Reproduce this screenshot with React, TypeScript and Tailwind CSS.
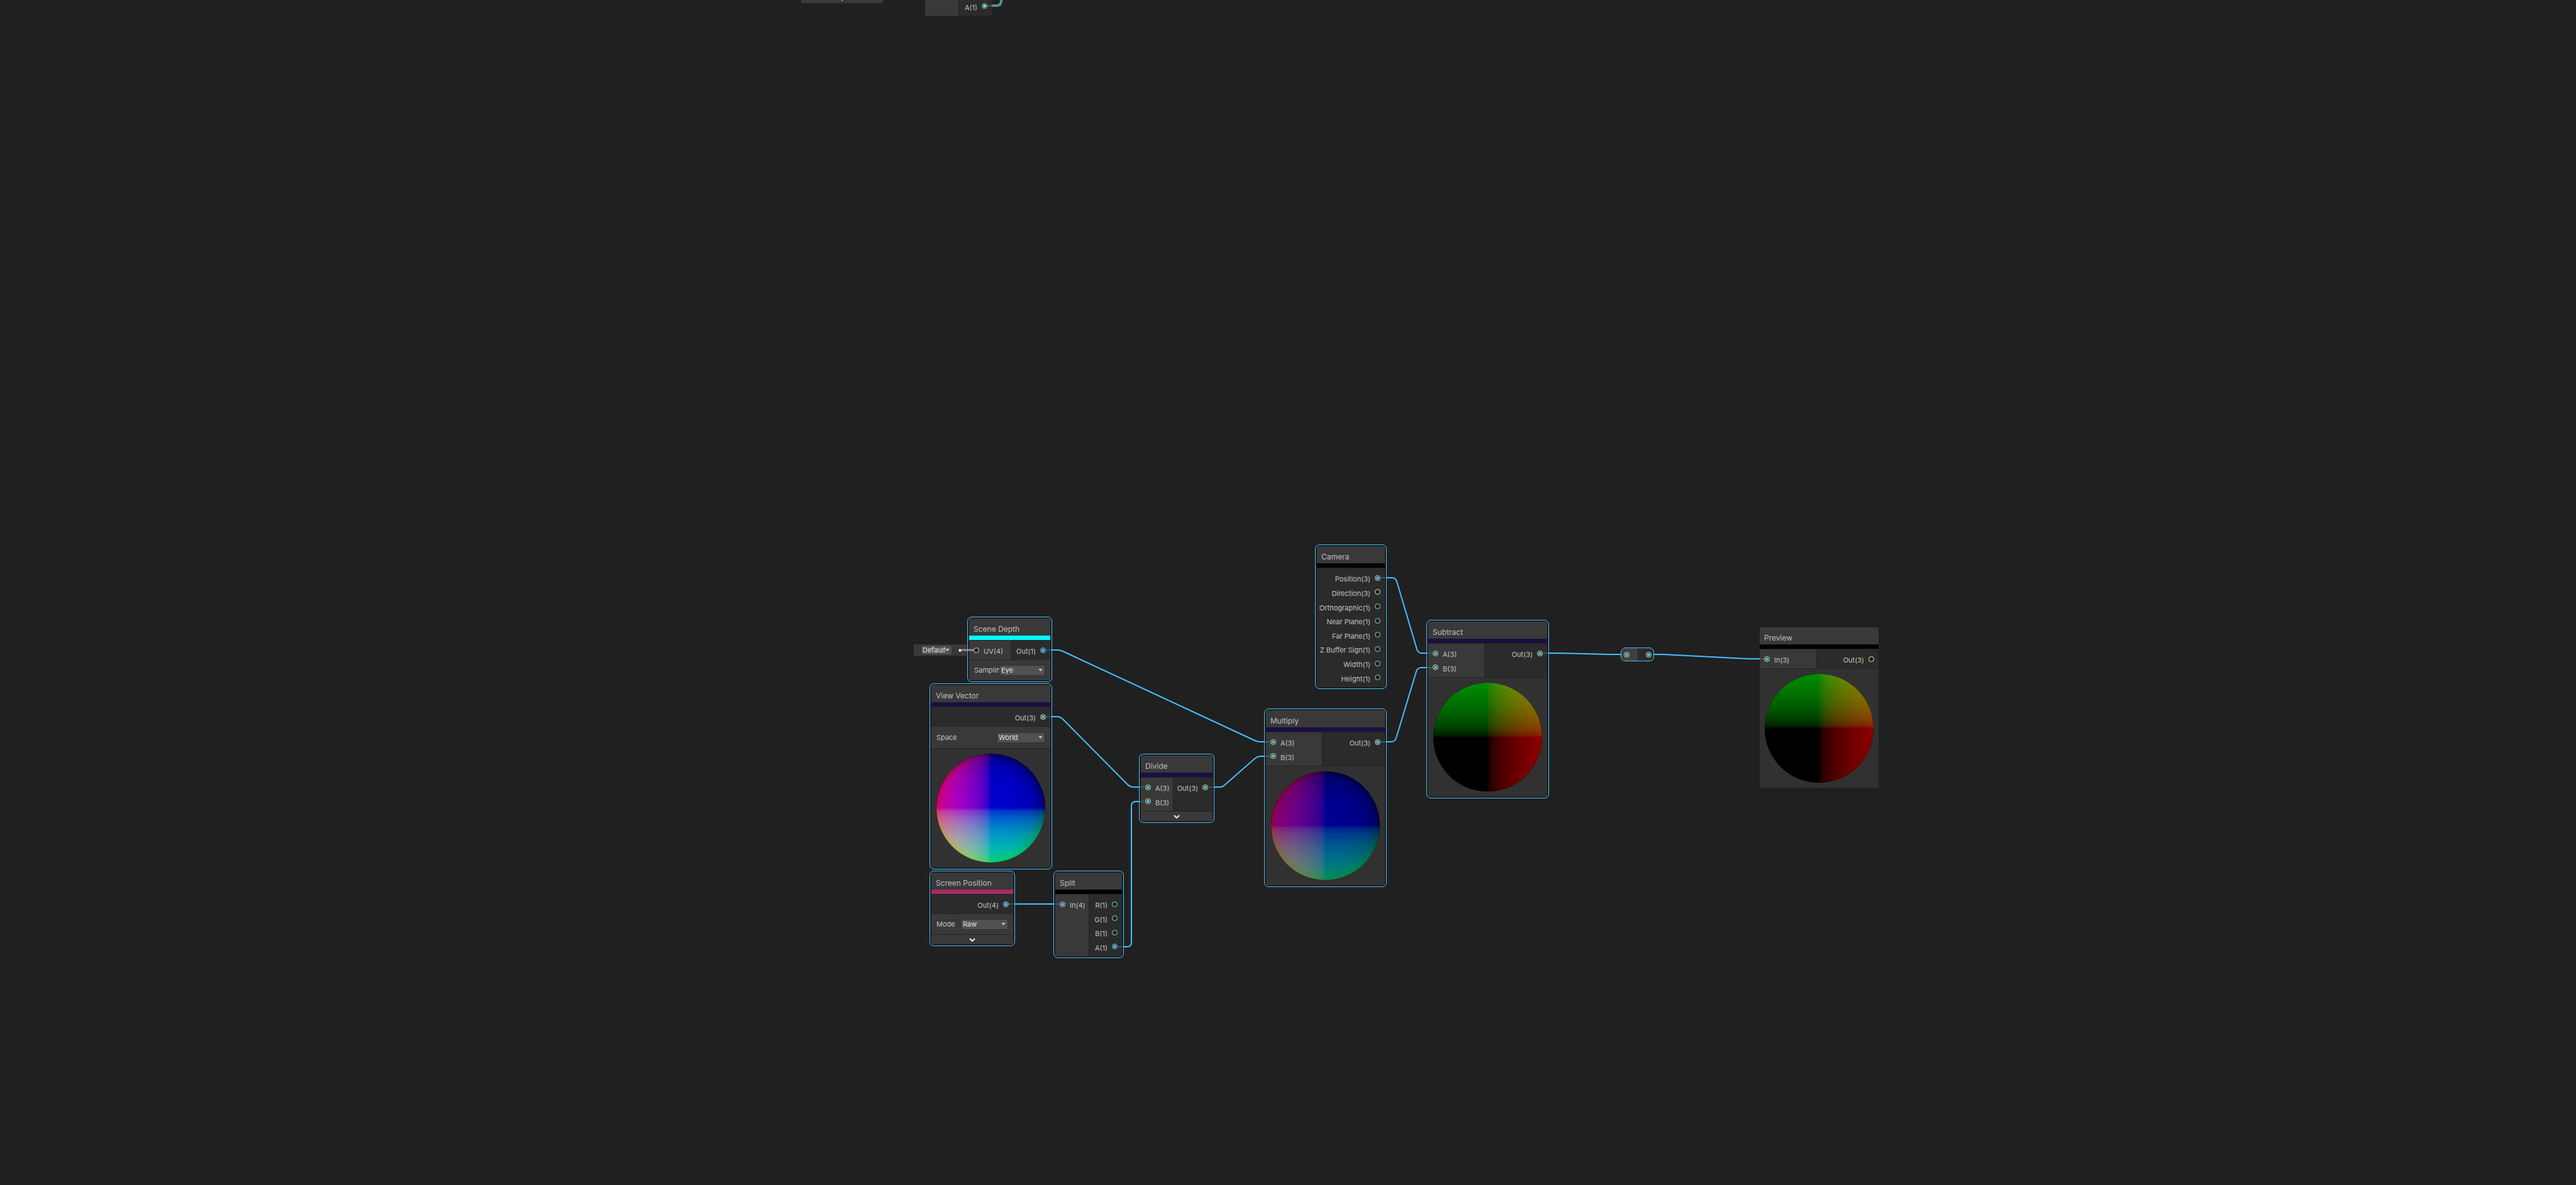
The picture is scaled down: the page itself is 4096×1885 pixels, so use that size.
import React from "react";

type PortKind = "vec1" | "vec3" | "vec4";
type PortData = { label: string; kind: PortKind; on?: boolean };

const ring: Record<PortKind, string> = {
  vec1: "border-[#7fdfe0]",
  vec3: "border-[#f2f28e]",
  vec4: "border-[#f4c4ee]",
};

function Dot({ kind, on, fill = "bg-[#44c0ff]" }: { kind: PortKind; on?: boolean; fill?: string }) {
  return (
    <span className={`flex size-[9px] shrink-0 items-center justify-center rounded-full border bg-[#1e1e1e] ${ring[kind]}`}>
      {on && <span className={`size-[5px] rounded-full ${fill}`} />}
    </span>
  );
}

function InPort({ label, kind, on }: PortData) {
  return (
    <li className="flex flex-1 items-center gap-[7px] pl-[7px]">
      <Dot kind={kind} on={on} />
      <span className="pt-[4px]">{label}</span>
    </li>
  );
}

function OutPort({ label, kind, on, fill }: PortData & { fill?: string }) {
  return (
    <li className="flex flex-1 items-center justify-end gap-[7px] pr-[7px]">
      <span className="pt-[4px]">{label}</span>
      <Dot kind={kind} on={on} fill={fill} />
    </li>
  );
}

function Picker({ label, value, className }: { label: string; value: string; className: string }) {
  return (
    <span className={`relative flex shrink-0 ${className}`}>
      <select
        aria-label={label}
        defaultValue={value}
        className="h-full w-full appearance-none overflow-hidden rounded-[2px] border border-[#303030] bg-[#515151] pr-[10px] pl-[2px] text-[11px] leading-[13px] text-[#e0e0e0]"
      >
        <option>{value}</option>
      </select>
      <svg viewBox="0 0 8 5" className="pointer-events-none absolute top-1/2 right-[4px] h-[4px] w-[7px] -translate-y-1/2">
        <path d="M0 0h8L4 5z" fill="#c4c4c4" />
      </svg>
    </span>
  );
}

function Control({ label, value, height, picker }: { label: string; value: string; height: string; picker: string }) {
  return (
    <div className={`flex items-center justify-between border-t border-[#232323] bg-[#393939] pr-[8px] pl-[8px] ${height}`}>
      <span className="min-w-0 whitespace-nowrap">{label}</span>
      <Picker label={label} value={value} className={picker} />
    </div>
  );
}

function Expand() {
  return (
    <button aria-label="Expand" className="flex h-[16px] w-full items-center justify-center border-t border-[#232323] bg-[#393939]">
      <svg viewBox="0 0 10 6" className="h-[6px] w-[10px]" fill="none" stroke="#f0f0f0" strokeWidth="2">
        <path d="M1 1l4 4 4-4" />
      </svg>
    </button>
  );
}

const stops = [0, 0.02, 0.06, 0.12, 0.2, 0.3, 0.45, 0.6, 0.8, 1];
const curve = (t: number) => Math.pow(t, 0.4545);

function AxisGradient({ id, color, x, y }: { id: string; color: [number, number, number]; x: number; y: number }) {
  return (
    <linearGradient id={id} gradientUnits="userSpaceOnUse" x1="100" y1="100" x2={100 + 100 * x} y2={100 + 100 * y}>
      {stops.map((t) => (
        <stop key={t} offset={t} stopColor={`rgb(${color.map((c) => Math.round(c * curve(t))).join(",")})`} />
      ))}
    </linearGradient>
  );
}

function Sphere({ id, red, green, blue = 0, flip }: { id: string; red: number; green: number; blue?: number; flip?: boolean }) {
  const d = flip ? -1 : 1;
  const falloff: [number, number][] = [
    [0, 1],
    [0.5, 0.95],
    [0.75, 0.86],
    [0.9, 0.72],
    [1, 0.44],
  ];
  return (
    <div className="border-t border-[#232323] bg-[#313131] p-[8px]">
      <svg viewBox="0 0 200 200" className="isolate block w-full">
        <defs>
          <AxisGradient id={`${id}-r`} color={[red, 0, 0]} x={d} y={0} />
          <AxisGradient id={`${id}-g`} color={[0, green, 0]} x={0} y={-d} />
          <radialGradient id={`${id}-b`}>
            {falloff.map(([t, k]) => (
              <stop key={t} offset={t} stopColor={`rgb(0,0,${Math.round(blue * k)})`} />
            ))}
          </radialGradient>
        </defs>
        <circle cx="100" cy="100" r="100" fill={`url(#${id}-b)`} />
        <circle cx="100" cy="100" r="100" fill={`url(#${id}-r)`} className="mix-blend-screen" />
        <circle cx="100" cy="100" r="100" fill={`url(#${id}-g)`} className="mix-blend-screen" />
      </svg>
    </div>
  );
}

type NodeProps = {
  title: string;
  place: string;
  bar: string;
  portsHeight: string;
  inWidth?: string;
  inputs?: PortData[];
  outputs: PortData[];
  selected?: boolean;
  children?: React.ReactNode;
};

function GraphNode({ title, place, bar, portsHeight, inWidth, inputs, outputs, selected = true, children }: NodeProps) {
  return (
    <section className={`absolute ${place} ${selected ? "rounded-[7px] border border-[#44c0ff] bg-[#1c1c1c] p-[2px]" : ""}`}>
      <h2 className="flex h-[27px] items-end bg-[#393939] pb-[2px] pl-[7px] text-[12px] leading-[16px] font-normal whitespace-nowrap text-[#bcbcbc]">{title}</h2>
      <div className={`h-[7px] ${bar}`} />
      <div className="flex border-t border-[#232323]">
        {inputs && (
          <ul className={`flex shrink-0 flex-col border-r border-[#232323] bg-[#393939] py-[4px] ${portsHeight} ${inWidth}`}>
            {inputs.map((p) => (
              <InPort key={p.label} {...p} />
            ))}
            {inputs.length === 1 && outputs.length === 4 && <li className="flex-[3]" />}
          </ul>
        )}
        <ul className={`flex flex-1 flex-col bg-[#2b2b2b] py-[4px] ${portsHeight}`}>
          {outputs.map((p) => (
            <OutPort key={p.label} {...p} />
          ))}
          {inputs?.length === 2 && <li className="flex-1" />}
        </ul>
      </div>
      {children}
    </section>
  );
}

const wires = [
  "M1659 1034H1681Q1686 1034 1690 1036L1991 1176Q1999 1180 2004 1180H2024",
  "M1659 1140H1681Q1686 1140 1690 1144L1793 1248Q1797 1252 1803 1252H1825",
  "M1599 1438H1689",
  "M1773 1506H1792Q1799 1506 1799 1499V1282Q1799 1275 1806 1275H1825",
  "M1917 1252H1940Q1944 1252 1947 1249L1996 1206Q2000 1203 2004 1203H2024",
  "M2190 1180H2212Q2218 1180 2220 1174L2252 1068Q2254 1062 2260 1062H2282",
  "M2190 919H2213Q2219 919 2221 925L2253 1033Q2255 1039 2261 1039H2282",
  "M2448 1039H2480L2560 1041H2587",
  "M2622 1041H2645L2780 1048Q2790 1048 2810 1048",
];

const stubs = [
  "M1664 1034H1673M1664 1140H1673M1604 1438H1614M1675 1438H1684M1778 1506H1787",
  "M1811 1252H1820M1811 1275H1820M1922 1252H1931M2010 1180H2019M2010 1203H2019",
  "M2195 1180H2205M2195 919H2205M2268 1039H2277M2268 1062H2277M2453 1039H2463M2798 1048H2805",
];

const arith = "bg-[#1d0e42]";
const ab: PortData[] = [
  { label: "A(3)", kind: "vec3", on: true },
  { label: "B(3)", kind: "vec3", on: true },
];
const out3: PortData[] = [{ label: "Out(3)", kind: "vec3", on: true }];

export default function App() {
  return (
    <main className="relative min-h-screen w-full overflow-hidden bg-[#202020] font-['Inter',sans-serif] text-[11px] leading-[14px] text-[#c0c0c0]">
      <svg className="absolute inset-0 h-full w-full" fill="none" stroke="#44c0ff" strokeWidth="2">
        {wires.map((d) => (
          <path key={d} d={d} />
        ))}
        <path d="M1577 9H1584Q1592 9 1592 1V-4" stroke="#5a8f8f" strokeWidth="4" />
      </svg>

      <div className="absolute top-0 left-[1274px] flex h-[5px] w-[130px] justify-center overflow-hidden bg-[#393939]">
        <svg viewBox="0 0 10 6" className="-mt-[5px] h-[6px] w-[10px]" fill="none" stroke="#f0f0f0" strokeWidth="2">
          <path d="M1 1l4 4 4-4" />
        </svg>
      </div>
      <div className="absolute top-0 left-[1471px] flex h-[25px] w-[106px] bg-[#2b2b2b]">
        <div className="w-[54px] border-r border-[#232323] bg-[#393939]" />
        <ul className="flex flex-1 flex-col pb-[6px]">
          <OutPort label="A(1)" kind="vec1" on fill="bg-[#84e4e7]" />
        </ul>
      </div>

      <div className="absolute top-[1025px] left-[1453px] flex h-[18px] w-[84px] items-center gap-[9px] bg-[#393939] pl-[11px]">
        <Picker label="UV channel" value="Default" className="h-[16px] w-[50px]" />
        <span className="flex size-[7px] items-center justify-center rounded-full bg-[#1a1a1a]">
          <span className="size-[5px] rounded-full bg-[#fbcbf4]" />
        </span>
      </div>

      <GraphNode
        title="Scene Depth"
        place="top-[981px] left-[1538px] w-[135px]"
        bar="bg-[#00ffff]"
        portsHeight="h-[30px]"
        inWidth="w-[67px]"
        inputs={[{ label: "UV(4)", kind: "vec4" }]}
        outputs={[{ label: "Out(1)", kind: "vec1", on: true }]}
      >
        <Control label="Samplin" value="Eye" height="h-[33px]" picker="h-[17px] w-[73px]" />
      </GraphNode>

      <GraphNode title="View Vector" place="top-[1087px] left-[1478px] w-[195px]" bar={arith} portsHeight="h-[30px]" outputs={out3}>
        <Control label="Space" value="World" height="h-[35px]" picker="h-[17px] w-[77px]" />
        <Sphere id="view" red={208} green={208} blue={208} flip />
      </GraphNode>

      <GraphNode
        title="Screen Position"
        place="top-[1385px] left-[1478px] w-[136px]"
        bar="bg-[#a62c60]"
        portsHeight="h-[30px]"
        outputs={[{ label: "Out(4)", kind: "vec4", on: true }]}
      >
        <Control label="Mode" value="Raw" height="h-[33px]" picker="h-[17px] w-[75px]" />
        <Expand />
      </GraphNode>

      <GraphNode
        title="Split"
        place="top-[1385px] left-[1675px] w-[112px]"
        bar="bg-[#020106]"
        portsHeight="h-[98px]"
        inWidth="w-[54px]"
        inputs={[{ label: "In(4)", kind: "vec4", on: true }]}
        outputs={[
          { label: "R(1)", kind: "vec1" },
          { label: "G(1)", kind: "vec1" },
          { label: "B(1)", kind: "vec1" },
          { label: "A(1)", kind: "vec1", on: true },
        ]}
      />

      <GraphNode title="Divide" place="top-[1199px] left-[1811px] w-[120px]" bar={arith} portsHeight="h-[53px]" inWidth="w-[52px]" inputs={ab} outputs={out3}>
        <Expand />
      </GraphNode>

      <GraphNode title="Multiply" place="top-[1127px] left-[2010px] w-[195px]" bar={arith} portsHeight="h-[53px]" inWidth="w-[90px]" inputs={ab} outputs={out3}>
        <Sphere id="multiply" red={140} green={140} blue={148} flip />
      </GraphNode>

      <GraphNode
        title="Camera"
        place="top-[866px] left-[2091px] w-[114px]"
        bar="bg-[#020106]"
        portsHeight="h-[189px]"
        outputs={[
          { label: "Position(3)", kind: "vec3", on: true },
          { label: "Direction(3)", kind: "vec3" },
          { label: "Orthographic(1)", kind: "vec1" },
          { label: "Near Plane(1)", kind: "vec1" },
          { label: "Far Plane(1)", kind: "vec1" },
          { label: "Z Buffer Sign(1)", kind: "vec1" },
          { label: "Width(1)", kind: "vec1" },
          { label: "Height(1)", kind: "vec1" },
        ]}
      />

      <GraphNode title="Subtract" place="top-[986px] left-[2268px] w-[195px]" bar={arith} portsHeight="h-[53px]" inWidth="w-[90px]" inputs={ab} outputs={out3}>
        <Sphere id="subtract" red={140} green={140} />
      </GraphNode>

      <div className="absolute top-[1030px] left-[2577px] flex h-[22px] w-[53px] overflow-hidden rounded-[7px] border border-[#44c0ff] bg-[#2b2b2b]">
        <div className="flex w-[27px] items-center border-r border-[#232323] bg-[#404040] pl-[4px]">
          <Dot kind="vec3" on />
        </div>
        <div className="flex flex-1 items-center justify-end pr-[3px]">
          <Dot kind="vec3" on />
        </div>
      </div>

      <GraphNode
        title="Preview"
        place="top-[998px] left-[2798px] w-[189px]"
        bar="bg-[#020106]"
        portsHeight="h-[30px]"
        inWidth="w-[91px]"
        inputs={[{ label: "In(3)", kind: "vec3", on: true }]}
        outputs={[{ label: "Out(3)", kind: "vec3" }]}
        selected={false}
      >
        <Sphere id="preview" red={140} green={140} />
      </GraphNode>

      <svg className="pointer-events-none absolute inset-0 h-full w-full" fill="none" stroke="#44c0ff" strokeOpacity="0.3" strokeWidth="2">
        {stubs.map((d) => (
          <path key={d} d={d} />
        ))}
        <path d="M1570 9H1577" stroke="#84e4e7" />
        <path d="M1529 1034H1548" stroke="#f4c4ee" strokeOpacity="0.55" strokeWidth="3" />
      </svg>
    </main>
  );
}
